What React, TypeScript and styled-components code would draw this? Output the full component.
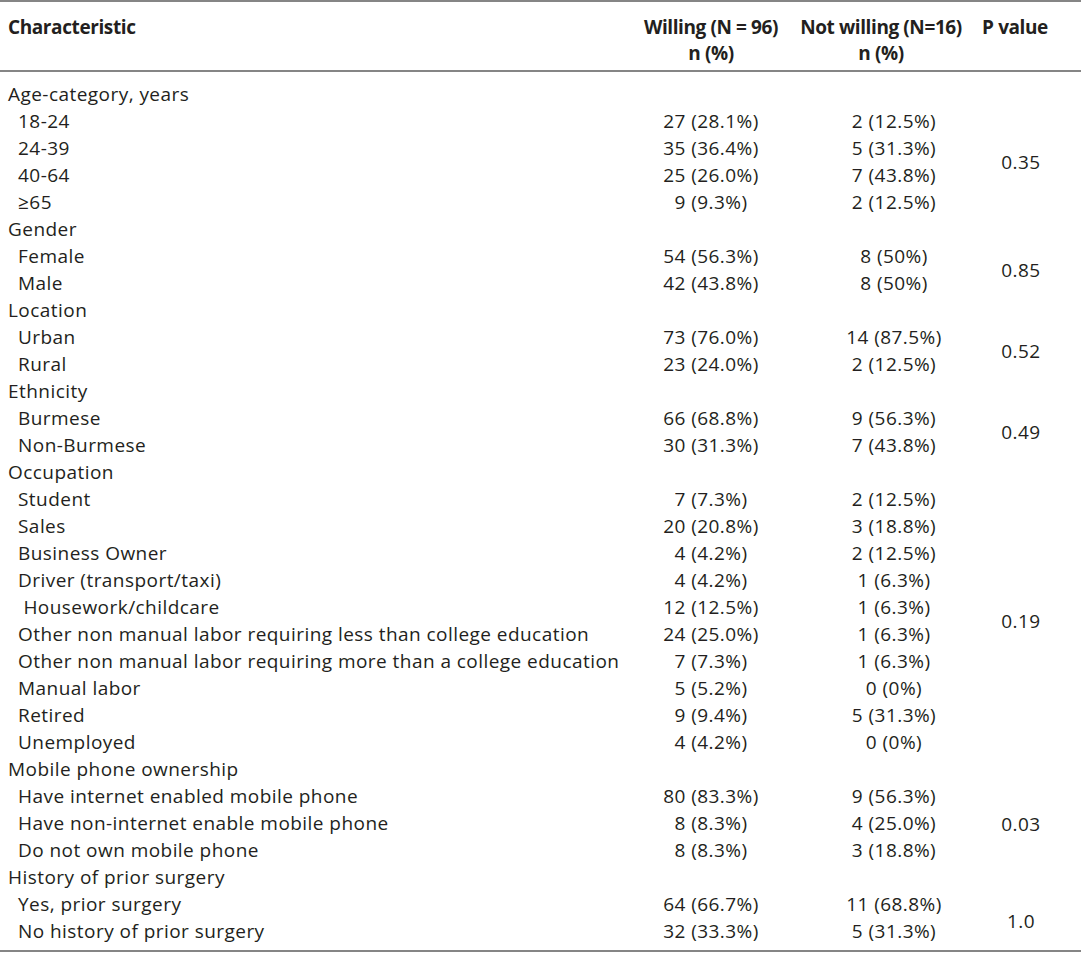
import React from "react";
import styled, { createGlobalStyle } from "styled-components";

const Global = createGlobalStyle`
  html, body { margin: 0; padding: 0; background: #fff; }
  body { font-family: "Open Sans", Lato, sans-serif; color: #231f20; }
`;

type Group = { title: string; p: string; rows: [string, string, string][] };

const groups: Group[] = [
  { title: "Age-category, years", p: "0.35", rows: [
    ["18-24", "27 (28.1%)", "2 (12.5%)"],
    ["24-39", "35 (36.4%)", "5 (31.3%)"],
    ["40-64", "25 (26.0%)", "7 (43.8%)"],
    ["≥65", "9 (9.3%)", "2 (12.5%)"],
  ]},
  { title: "Gender", p: "0.85", rows: [
    ["Female", "54 (56.3%)", "8 (50%)"],
    ["Male", "42 (43.8%)", "8 (50%)"],
  ]},
  { title: "Location", p: "0.52", rows: [
    ["Urban", "73 (76.0%)", "14 (87.5%)"],
    ["Rural", "23 (24.0%)", "2 (12.5%)"],
  ]},
  { title: "Ethnicity", p: "0.49", rows: [
    ["Burmese", "66 (68.8%)", "9 (56.3%)"],
    ["Non-Burmese", "30 (31.3%)", "7 (43.8%)"],
  ]},
  { title: "Occupation", p: "0.19", rows: [
    ["Student", "7 (7.3%)", "2 (12.5%)"],
    ["Sales", "20 (20.8%)", "3 (18.8%)"],
    ["Business Owner", "4 (4.2%)", "2 (12.5%)"],
    ["Driver (transport/taxi)", "4 (4.2%)", "1 (6.3%)"],
    [" Housework/childcare", "12 (12.5%)", "1 (6.3%)"],
    ["Other non manual labor requiring less than college education", "24 (25.0%)", "1 (6.3%)"],
    ["Other non manual labor requiring more than a college education", "7 (7.3%)", "1 (6.3%)"],
    ["Manual labor", "5 (5.2%)", "0 (0%)"],
    ["Retired", "9 (9.4%)", "5 (31.3%)"],
    ["Unemployed", "4 (4.2%)", "0 (0%)"],
  ]},
  { title: "Mobile phone ownership", p: "0.03", rows: [
    ["Have internet enabled mobile phone", "80 (83.3%)", "9 (56.3%)"],
    ["Have non-internet enable mobile phone", "8 (8.3%)", "4 (25.0%)"],
    ["Do not own mobile phone", "8 (8.3%)", "3 (18.8%)"],
  ]},
  { title: "History of prior surgery", p: "1.0", rows: [
    ["Yes, prior surgery", "64 (66.7%)", "11 (68.8%)"],
    ["No history of prior surgery", "32 (33.3%)", "5 (31.3%)"],
  ]},
];

const Table = styled.table`
  width: 1081px;
  border-collapse: collapse;
  table-layout: fixed;
  font-size: 19px;
  letter-spacing: 0.45px;
  border-top: 2px solid #858585;
  border-bottom: 2px solid #858585;
`;

const Head = styled.thead`
  tr { border-bottom: 2px solid #858585; }
`;

const HeadCell = styled.th<{ $align?: string; $padR?: number; $w: number }>`
  box-sizing: border-box;
  width: ${(p) => p.$w}px;
  font-weight: 700;
  line-height: 26px;
  vertical-align: top;
  text-align: ${(p) => p.$align ?? "center"};
  padding: 12px ${(p) => p.$padR ?? 0}px 4px ${(p) => (p.$align === "left" ? 8 : 0)}px;
  white-space: nowrap;
  letter-spacing: -0.4px;
`;

const Body = styled.tbody`
  tr:first-child td { padding-top: 9px; }
  tr:last-child td { padding-bottom: 5px; }
`;

const LabelCell = styled.td<{ $sub?: boolean }>`
  height: 27px;
  line-height: 27px;
  padding: 0 0 0 ${(p) => (p.$sub ? 18 : 8)}px;
  white-space: pre;
  box-sizing: content-box;
`;

const ValueCell = styled.td<{ $padL?: number }>`
  height: 27px;
  line-height: 27px;
  text-align: center;
  padding: 0 0 0 ${(p) => p.$padL ?? 0}px;
  white-space: nowrap;
  box-sizing: content-box;
`;

const PCell = styled.td`
  text-align: center;
  vertical-align: middle;
  padding: 0 11px 0 0;
`;

export default function App() {
  const bodyRows: React.ReactNode[] = [];
  groups.forEach((g, gi) => {
    bodyRows.push(
      <tr key={`g${gi}`}>
        <LabelCell>{g.title}</LabelCell>
        <ValueCell />
        <ValueCell />
        <ValueCell />
      </tr>
    );
    g.rows.forEach((r, ri) => {
      bodyRows.push(
        <tr key={`g${gi}r${ri}`}>
          <LabelCell $sub>{r[0]}</LabelCell>
          <ValueCell>{r[1]}</ValueCell>
          <ValueCell $padL={26}>{r[2]}</ValueCell>
          {ri === 0 && <PCell rowSpan={g.rows.length}>{g.p}</PCell>}
        </tr>
      );
    });
  });

  return (
    <>
      <Global />
      <Table>
        <Head>
          <tr>
            <HeadCell $align="left" $w={632}>Characteristic</HeadCell>
            <HeadCell $w={158}>Willing (N = 96)<br />n (%)</HeadCell>
            <HeadCell $w={182}>Not willing (N=16)<br />n (%)</HeadCell>
            <HeadCell $w={109} $padR={23}>P value</HeadCell>
          </tr>
        </Head>
        <Body>{bodyRows}</Body>
      </Table>
    </>
  );
}
